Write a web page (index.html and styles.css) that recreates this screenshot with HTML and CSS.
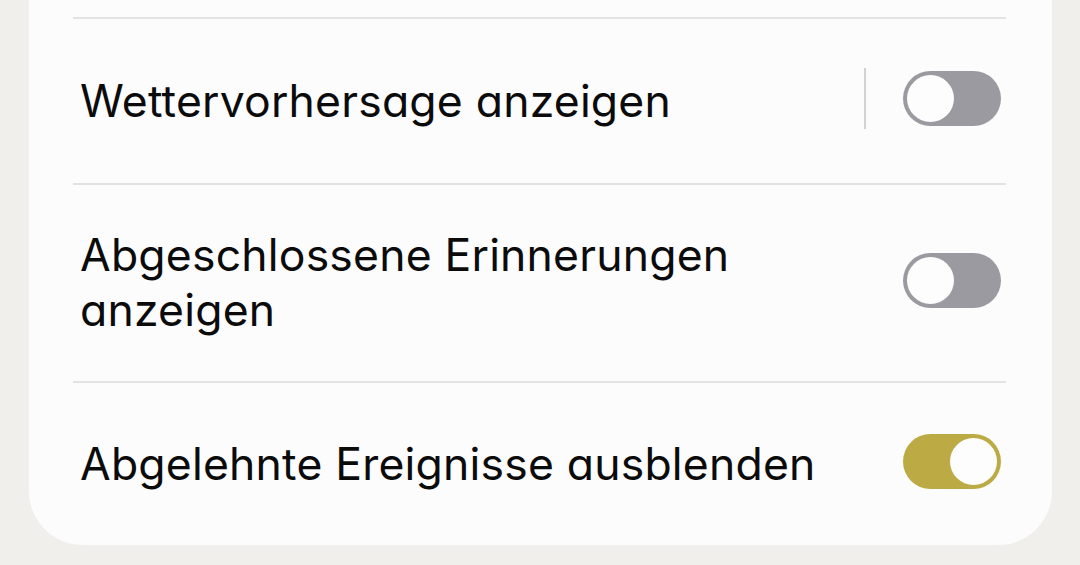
FILE: index.html
```html
<!DOCTYPE html>
<html lang="de">
<head>
<meta charset="utf-8">
<title>Einstellungen</title>
<link rel="stylesheet" href="styles.css">
</head>
<body>
<div class="page">
  <section class="card">
    <div class="list">
      <div class="row">
        <span class="label">Wettervorhersage anzeigen</span>
        <span class="vsep"></span>
        <span class="switch"><span class="knob"></span></span>
      </div>
      <div class="row">
        <span class="label">Abgeschlossene Erinnerungen anzeigen</span>
        <span class="switch"><span class="knob"></span></span>
      </div>
      <div class="row">
        <span class="label">Abgelehnte Ereignisse ausblenden</span>
        <span class="switch on"><span class="knob"></span></span>
      </div>
    </div>
  </section>
</div>
</body>
</html>
```
FILE: styles.css
```css
* { box-sizing: border-box; }
html, body {
  margin: 0;
  padding: 0;
  background: #f0efeb;
}
body {
  width: 1080px;
  height: 565px;
  overflow: hidden;
  font-family: Inter, "Noto Sans", sans-serif;
  font-feature-settings: "cv11" 1;
  color: #0b0b0b;
}
.page {
  padding: 0 28px 0 29px;
}
.card {
  background: #fcfcfc;
  border-radius: 0 0 54px 54px;
  padding-top: 17px;
}
.list {
  margin: 0 46px 0 44px;
}
.row {
  display: flex;
  align-items: center;
  min-height: 166px;
  padding: 43px 5px 43px 7px;
  border-top: 2px solid #e3e3e3;
}
.row:last-child {
  min-height: 164px;
}
.label {
  flex: 1;
  font-size: 44.5px;
  line-height: 55px;
  letter-spacing: 0.2px;
  padding-right: 40px;
}
.vsep {
  width: 2px;
  height: 61px;
  background: #d2d2d2;
  margin: 0 37px 5px 0;
}
.switch {
  position: relative;
  flex: none;
  width: 98px;
  height: 55px;
  margin-bottom: 5px;
  border-radius: 28px;
  background: #9b9aa0;
}
.knob {
  position: absolute;
  top: 4px;
  left: 4px;
  width: 47px;
  height: 47px;
  border-radius: 50%;
  background: #fdfdfd;
}
.switch.on {
  background: #bcab44;
}
.switch.on .knob {
  left: 47px;
}
```
